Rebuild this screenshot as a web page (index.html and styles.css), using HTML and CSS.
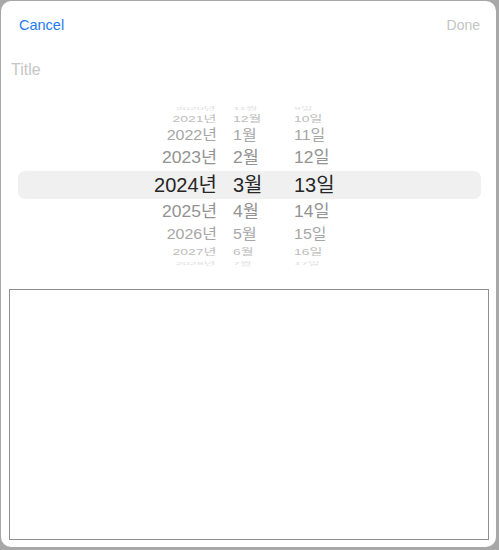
FILE: index.html
```html
<!DOCTYPE html>
<html lang="ko">
<head>
<meta charset="utf-8">
<title>Date sheet</title>
<link rel="stylesheet" href="styles.css">
</head>
<body>
<div class="sheet">
  <div class="header">
    <span class="cancel">Cancel</span>
    <span class="done">Done</span>
  </div>
  <div class="title">Title</div>
  <div class="picker">
    <div class="row r4"><span class="y">2020년</span><span class="m">11월</span><span class="d">9일</span></div>
    <div class="row r3"><span class="y">2021년</span><span class="m">12월</span><span class="d">10일</span></div>
    <div class="row r2"><span class="y">2022년</span><span class="m">1월</span><span class="d">11일</span></div>
    <div class="row r1"><span class="y">2023년</span><span class="m">2월</span><span class="d">12일</span></div>
    <div class="row sel"><span class="y">2024년</span><span class="m">3월</span><span class="d">13일</span></div>
    <div class="row r1 b"><span class="y">2025년</span><span class="m">4월</span><span class="d">14일</span></div>
    <div class="row r2 b"><span class="y">2026년</span><span class="m">5월</span><span class="d">15일</span></div>
    <div class="row r3 b"><span class="y">2027년</span><span class="m">6월</span><span class="d">16일</span></div>
    <div class="row r4 b"><span class="y">2028년</span><span class="m">7월</span><span class="d">17일</span></div>
  </div>
  <textarea class="notes"></textarea>
</div>
</body>
</html>
```
FILE: styles.css
```css
html, body {
  margin: 0;
  padding: 0;
  background: #a8a8a8;
  font-family: "Liberation Sans", "Noto Sans CJK KR", sans-serif;
}
body {
  width: 499px;
  height: 550px;
  overflow: hidden;
}
.sheet {
  margin: 1px 3px 3px 1px;
  width: 495px;
  height: 546px;
  background: #fff;
  border-radius: 10px;
  display: flex;
  flex-direction: column;
  box-sizing: border-box;
  padding-bottom: 7px;
}
.header {
  height: 48px;
  flex: none;
  display: flex;
  align-items: center;
  justify-content: space-between;
  padding: 0 16px 0 18px;
}
.cancel {
  color: #1f7bf2;
  font-size: 14.5px;
}
.done {
  color: #c4c4c4;
  font-size: 14px;
}
.title {
  flex: none;
  margin-top: 11px;
  padding-left: 10px;
  height: 20px;
  line-height: 20px;
  font-size: 16px;
  color: #c6c6c6;
}
.picker {
  flex: none;
  margin-top: 21px;
  display: flex;
  flex-direction: column;
}
.row {
  display: grid;
  grid-template-columns: 199px 45px 1fr;
  column-gap: 16px;
  margin: 0 15px 0 17px;
  align-items: center;
  white-space: nowrap;
}
.row .y {
  text-align: right;
}
.row span {
  display: block;
  line-height: 1;
}
.sel {
  height: 28px;
  background: #f0f0f0;
  border-radius: 7px;
  font-size: 20px;
  color: #262626;
}
.r1 {
  height: 26px;
  font-size: 17.5px;
  color: #939393;
}
.r1.b { height: 25px; }
.r1 span { transform: scaleY(0.97); }
.r2 {
  height: 20px;
  font-size: 16.5px;
  color: #a6a6a6;
}
.r2 span { transform: scale(0.97, 0.88); }
.r2 .y { transform-origin: right center; }
.r2 .m, .r2 .d { transform-origin: left center; }
.r3 {
  height: 14px;
  font-size: 15px;
  color: #bdbdbd;
}
.r3.b { height: 13px; }
.r3 span { transform: scale(0.93, 0.62); }
.r3 .y { transform-origin: 95% center; }
.r3 .m, .r3 .d { transform-origin: left center; }
.r4 {
  height: 10px;
  font-size: 14px;
  color: #dedede;
}
.r4.b { height: 7px; }
.r4 span { transform: scale(0.9, 0.3); }
.r4 .y { transform-origin: 92% center; }
.r4 .m, .r4 .d { transform-origin: left center; }
.notes {
  flex: 1;
  margin: 25px 7px 0 8px;
  border: 1px solid #8e8e8e;
  border-radius: 0;
  padding: 2px;
  resize: none;
  background: #fff;
  font-family: "Liberation Sans", sans-serif;
  font-size: 14px;
}
```
